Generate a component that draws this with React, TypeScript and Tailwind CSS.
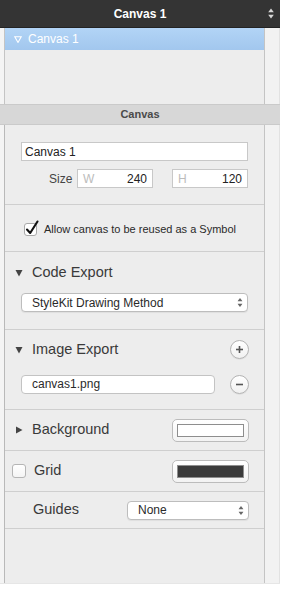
import React from 'react';

const font = { fontFamily: '"Liberation Sans", Arial, Helvetica, sans-serif' };

function UpDown({ className = '' }: { className?: string }) {
  return (
    <svg width="6" height="11" viewBox="0 0 6 11" className={className}>
      <path d="M3 0.5 L5.8 4.2 L0.2 4.2 Z" fill="currentColor" />
      <path d="M3 10.5 L5.8 6.8 L0.2 6.8 Z" fill="currentColor" />
    </svg>
  );
}

function Disclosure({ open }: { open: boolean }) {
  return (
    <svg width="8" height="8" viewBox="0 0 8 8" className="text-[#444]">
      {open ? <path d="M0.5 1 L7.5 1 L4 7.5 Z" fill="currentColor" /> : <path d="M1 0.5 L7.5 4 L1 7.5 Z" fill="currentColor" />}
    </svg>
  );
}

function CircleButton({ minus }: { minus?: boolean }) {
  return (
    <div className="w-[19px] h-[19px] rounded-full border border-[#b3b3b3] bg-gradient-to-b from-white to-[#f1f1f1] shadow-[0_1px_0_rgba(0,0,0,0.05)] flex items-center justify-center">
      <svg width="9" height="9" viewBox="0 0 9 9">
        <path d="M1 4.5 H8" stroke="#555" strokeWidth="1.6" />
        {!minus && <path d="M4.5 1 V8" stroke="#555" strokeWidth="1.6" />}
      </svg>
    </div>
  );
}

function Select({ label, className }: { label: string; className: string }) {
  return (
    <div className={`h-[19px] rounded-[4px] border border-[#bdbdbd] bg-white shadow-[0_1px_1px_rgba(0,0,0,0.06)] flex items-center justify-between pl-[10px] pr-[4px] ${className}`}>
      <span className="text-[12px] text-[#2a2a2a]">{label}</span>
      <UpDown className="text-[#666] scale-90" />
    </div>
  );
}

function ColorWell({ fill }: { fill: string }) {
  return (
    <div className="w-[77px] h-[23px] rounded-[5px] border border-[#bcbcbc] bg-gradient-to-b from-white to-[#f3f3f3] flex items-center justify-center">
      <div className="w-[67px] h-[13px] border border-[#8e8e8e]" style={{ background: fill }} />
    </div>
  );
}

function NumField({ letter, value }: { letter: string; value: string }) {
  return (
    <div className="w-[76px] h-[19px] border border-[#c8c8c8] bg-white flex items-center justify-between px-[5px] text-[12px]">
      <span className="text-[#bcbcbc]">{letter}</span>
      <span className="text-[#222]">{value}</span>
    </div>
  );
}

export default function App() {
  return (
    <div className="w-[283px] h-[596px] bg-white" style={font}>
      <div className="w-[280px] bg-[#f4f4f4]">
        {/* title bar */}
        <div className="h-[28px] bg-[#343434] border-b border-[#232323] relative flex items-center justify-center">
          <span className="text-white font-bold text-[12px]">Canvas 1</span>
          <UpDown className="absolute right-[6px] top-[8px] text-[#d8d8d8]" />
        </div>

        {/* outline list */}
        <div className="flex h-[76px]">
          <div className="w-[4px]" />
          <div className="w-[260px] bg-[#ededed] border-l border-[#c4c4c4]">
            <div className="h-[22px] bg-gradient-to-b from-[#b2d4f6] to-[#a2c7ee] flex items-center pl-[9px] gap-[6px]">
              <svg width="8" height="7" viewBox="0 0 8 7">
                <path d="M0.8 0.8 L7.2 0.8 L4 6.4 Z" fill="none" stroke="white" strokeWidth="1.1" />
              </svg>
              <span className="text-white text-[12px]">Canvas 1</span>
            </div>
          </div>
          <div className="w-[16px] border-l border-[#c4c4c4] bg-[#f2f2f2] border-r border-r-[#e2e2e2]" />
        </div>

        {/* section header */}
        <div className="h-[21px] bg-[#d7d7d7] border-y border-[#cacaca] flex items-center justify-center">
          <span className="text-[11px] font-bold text-[#4a4a4a]">Canvas</span>
        </div>

        <div className="flex h-[458px]">
          <div className="w-[4px]" />
          <div className="w-[260px] bg-[#ededed] border-l border-[#b9b9b9] flex flex-col">
            {/* name + size */}
            <div className="h-[80px] border-b border-[#cfcfcf] pt-[17px] pl-[16px]">
              <div className="w-[227px] h-[19px] border border-[#c8c8c8] bg-white flex items-center px-[3px] text-[12px] text-[#222]">Canvas 1</div>
              <div className="mt-[8px] flex items-center">
                <span className="text-[12px] text-[#444] ml-[28px] w-[28px]">Size</span>
                <NumField letter="W" value="240" />
                <div className="w-[19px]" />
                <NumField letter="H" value="120" />
              </div>
            </div>

            {/* symbol */}
            <div className="h-[47px] border-b border-[#cfcfcf] flex items-center pl-[19px] pt-[2px]">
              <div className="relative w-[13px] h-[13px] rounded-[3px] border border-[#a9a9a9] bg-white">
                <svg width="14" height="16" viewBox="0 0 14 16" className="absolute left-[0px] -top-[4px]">
                  <path d="M2 9.5 L5.2 13 L12.5 1.5" fill="none" stroke="#111" strokeWidth="2.1" strokeLinecap="round" strokeLinejoin="round" />
                </svg>
              </div>
              <span className="ml-[7px] text-[11px] text-[#2a2a2a]">Allow canvas to be reused as a Symbol</span>
            </div>

            {/* code export */}
            <div className="h-[78px] border-b border-[#cfcfcf] pl-[10px] pt-[12px]">
              <div className="flex items-center gap-[9px] h-[18px]">
                <Disclosure open />
                <span className="text-[14.5px] text-[#3a3a3a]">Code Export</span>
              </div>
              <Select label="StyleKit Drawing Method" className="w-[227px] ml-[6px] mt-[11px]" />
            </div>

            {/* image export */}
            <div className="h-[80px] border-b border-[#cfcfcf] pl-[10px] pt-[9px]">
              <div className="flex items-center justify-between pr-[15px]">
                <div className="flex items-center gap-[9px]">
                  <Disclosure open />
                  <span className="text-[14.5px] text-[#3a3a3a]">Image Export</span>
                </div>
                <CircleButton />
              </div>
              <div className="flex items-center justify-between pr-[15px] mt-[14px] ml-[6px]">
                <div className="w-[194px] h-[19px] rounded-[4px] border border-[#c3c3c3] bg-white flex items-center pl-[10px] text-[12px] text-[#2a2a2a]">canvas1.png</div>
                <CircleButton minus />
              </div>
            </div>

            {/* background */}
            <div className="h-[41px] border-b border-[#cfcfcf] flex items-center justify-between pl-[10px] pr-[15px]">
              <div className="flex items-center gap-[9px]">
                <Disclosure open={false} />
                <span className="text-[14.5px] text-[#3a3a3a]">Background</span>
              </div>
              <ColorWell fill="#ffffff" />
            </div>

            {/* grid */}
            <div className="h-[41px] border-b border-[#cfcfcf] flex items-center justify-between pl-[7px] pr-[15px]">
              <div className="flex items-center gap-[8px]">
                <div className="w-[14px] h-[14px] rounded-[3px] border border-[#b5b5b5] bg-gradient-to-b from-white to-[#f4f4f4]" />
                <span className="text-[14.5px] text-[#3a3a3a]">Grid</span>
              </div>
              <ColorWell fill="#3b3b3b" />
            </div>

            {/* guides */}
            <div className="h-[37px] border-b border-[#cfcfcf] flex items-center justify-between pl-[28px] pr-[15px]">
              <span className="text-[14.5px] text-[#3a3a3a]">Guides</span>
              <Select label="None" className="w-[122px]" />
            </div>
          </div>
          <div className="w-[16px] border-l border-[#c4c4c4] bg-[#f2f2f2] border-r border-r-[#e2e2e2]" />
        </div>
        <div className="h-[1px] bg-[#e6e6e6]" />
      </div>
    </div>
  );
}
